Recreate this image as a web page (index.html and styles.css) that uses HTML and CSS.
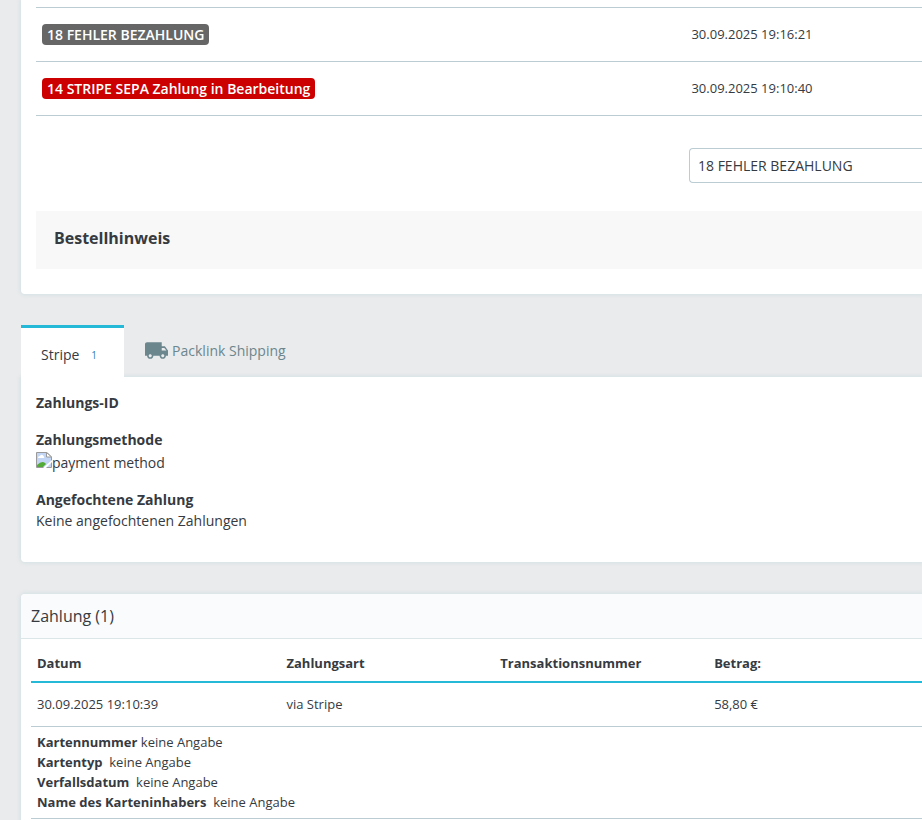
FILE: index.html
```
<!DOCTYPE html>
<html lang="de">
<head>
    <meta charset="UTF-8">
    <meta name="viewport" content="width=device-width, initial-scale=1.0">
    <title>Bestellung</title>
    <link rel="stylesheet" href="styles.css">
</head>
<body>
    <main class="content">
        <!-- Status -->
        <section class="card card-status">
            <table class="status-table">
                <tbody>
                    <tr>
                        <td class="col-status"><span class="badge badge-grey">18 FEHLER BEZAHLUNG</span></td>
                        <td>30.09.2025 19:16:21</td>
                    </tr>
                    <tr>
                        <td class="col-status"><span class="badge badge-red">14 STRIPE SEPA Zahlung in Bearbeitung</span></td>
                        <td>30.09.2025 19:10:40</td>
                    </tr>
                </tbody>
            </table>
            <form class="status-form">
                <select class="status-select" aria-label="Status">
                    <option>18 FEHLER BEZAHLUNG</option>
                    <option>14 STRIPE SEPA Zahlung in Bearbeitung</option>
                </select>
            </form>
            <div class="note">
                <h3 class="note-title">Bestellhinweis</h3>
            </div>
        </section>

        <!-- Module -->
        <nav class="tabs">
            <a class="tab tab-active" href="#stripe">Stripe <span class="tab-count">1</span></a>
            <a class="tab" href="#packlink">
                <!-- Material "local_shipping" -->
                <svg class="truck" viewBox="1 4 22 16" aria-hidden="true">
                    <path fill="currentColor" d="M20 8h-3V4H3c-1.100 0-2 .9-2 2v11h2c0 1.660 1.340 3 3 3s3-1.340 3-3h6c0 1.660 1.340 3 3 3s3-1.340 3-3h2v-5l-3-4zM6 18.500c-.83 0-1.500-.67-1.500-1.500s.67-1.500 1.500-1.500 1.500.67 1.500 1.500-.67 1.500-1.500 1.500zm13.500-9l1.960 2.500H17V9.500h2.500zm-1.500 9c-.83 0-1.500-.67-1.500-1.500s.67-1.500 1.500-1.500 1.500.67 1.500 1.500-.67 1.500-1.500 1.500z"/>
                </svg>
                Packlink Shipping
            </a>
        </nav>
        <section class="card card-stripe" id="stripe">
            <dl class="details">
                <dt>Zahlungs-ID</dt>
                <dt>Zahlungsmethode</dt>
                <dd class="method">
                    <svg class="broken" viewBox="0 0 16 16" aria-hidden="true">
                        <path fill="#c3d5f5" d="M.5.500h10.500l4.500 4.500v10.500H.5z"/>
                        <path fill="#fff" d="M2 6q0-2 2-2 1-2 2.500-1T8 5q1 1-.5 1z"/>
                        <path fill="#55ab38" d="M1 15v-2q5-5 8-2l1 1-3 3z"/>
                        <path fill="none" stroke="#9a9a9a" d="M.5 15.500V.500h10.500l4.500 4.500v10.500H.5"/>
                        <path fill="#fff" stroke="#9a9a9a" d="M10.500.500V5h5z"/>
                        <path fill="#fff" d="M16 8v2l-6 6H7z"/>
                    </svg>
                    <span>payment method</span>
                </dd>
                <dt>Angefochtene Zahlung</dt>
                <dd>Keine angefochtenen Zahlungen</dd>
            </dl>
        </section>

        <!-- Zahlung -->
        <section class="card card-payment">
            <h2 class="card-header">Zahlung (1)</h2>
            <div class="card-body">
                <table class="payment-table">
                    <thead>
                        <tr>
                            <th class="col-date">Datum</th>
                            <th class="col-mid">Zahlungsart</th>
                            <th class="col-mid">Transaktionsnummer</th>
                            <th>Betrag:</th>
                        </tr>
                    </thead>
                    <tbody>
                        <tr>
                            <td>30.09.2025 19:10:39</td>
                            <td>via Stripe</td>
                            <td></td>
                            <td>58,80 €</td>
                        </tr>
                        <tr>
                            <td class="payment-info" colspan="4">
                                <p><strong>Kartennummer</strong> keine Angabe</p>
                                <p><strong>Kartentyp</strong>&nbsp; keine Angabe</p>
                                <p><strong>Verfallsdatum</strong>&nbsp; keine Angabe</p>
                                <p><strong>Name des Karteninhabers</strong>&nbsp; keine Angabe</p>
                            </td>
                        </tr>
                    </tbody>
                </table>
            </div>
        </section>
    </main>
</body>
</html>
```

FILE: styles.css
```
* {
    box-sizing: border-box;
}
body {
    margin: 0;
    background-color: #eaebec;
    color: #363a41;
    font-family: "Open Sans", "Noto Sans", sans-serif;
    font-size: 14px;
    line-height: 21px;
    overflow-x: hidden;
}
.content {
    padding-left: 21px;
}
.card {
    background-color: #fff;
    border-radius: 4px 0 0 4px;
    box-shadow: 0 0 4px 1px #d3e0e4;
}
table {
    width: 100%;
    border-collapse: collapse;
    table-layout: fixed;
    font-size: 13px;
}
th,
td {
    padding: 0 6px;
    text-align: left;
}

/* Status */
.card-status {
    padding: 7px 0 25px 15px;
    border-top-left-radius: 0;
}
.status-table td {
    height: 54px;
    border-top: 1px solid #bbcdd2;
    border-bottom: 1px solid #bbcdd2;
}
.col-status {
    width: 73.3%;
}
.badge {
    display: inline-block;
    padding: 0 5px;
    border-radius: 4px;
    color: #fff;
    font-size: 14px;
    font-weight: 600;
}
.badge-grey {
    background-color: #666;
}
.badge-red {
    background-color: #c00;
}
.status-form {
    display: flex;
    justify-content: flex-end;
    padding: 32px 0 28px;
}
.status-select {
    width: 26.3%;
    height: 35px;
    padding: 0 8px;
    appearance: none;
    background-color: #fff;
    border: 1px solid #bbcdd2;
    border-right: none;
    border-radius: 4px 0 0 4px;
    color: #363a41;
    font-family: inherit;
    font-size: 14px;
}
.note {
    padding: 16px 18px 20px;
    background-color: #f8f8f8;
}
.note-title {
    margin: 0;
    font-size: 16px;
    font-weight: 700;
    line-height: 22px;
}

/* Module */
.tabs {
    display: flex;
    margin-top: 31px;
}
.tab {
    display: flex;
    align-items: center;
    height: 52px;
    padding: 0 21px 2px;
    color: #6c868e;
    text-decoration: none;
}
.tab-active {
    position: relative;
    padding: 3px 20px 0;
    background-color: #fff;
    border-top: 3px solid #25b9d7;
    color: #363a41;
}
.tab-count {
    margin: 3px 7px 0 12px;
    color: #2e7fb5;
    font-size: 10px;
}
.truck {
    width: 23px;
    height: 17px;
    margin-right: 4px;
}
.card-stripe {
    padding: 15px 15px 31px;
    border-top-left-radius: 0;
}
.details {
    margin: 0;
}
.details dt {
    font-weight: 700;
}
.details dt:not(:first-child) {
    margin-top: 16px;
}
.details dd {
    margin: 0;
}
.method {
    display: flex;
    padding-top: 2px;
}
.broken {
    width: 16px;
    height: 16px;
}

/* Zahlung */
.card-payment {
    margin-top: 32px;
}
.card-header {
    margin: 0;
    padding: 11px 10px;
    background-color: #fafbfc;
    border-bottom: 1px solid #dbe6e9;
    border-radius: 4px 0 0;
    font-size: 16px;
    font-weight: 500;
    line-height: 22px;
}
.card-body {
    padding: 7px 0 10px 10px;
}
.payment-table th {
    height: 36px;
    border-bottom: 2px solid #25b9d7;
    font-weight: 700;
}
.payment-table td {
    height: 44px;
    border-bottom: 1px solid #bbcdd2;
}
.payment-table .payment-info {
    padding: 5px 6px 6px;
    line-height: 20px;
}
.payment-info p {
    margin: 0;
}
.col-date {
    width: 28%;
}
.col-mid {
    width: 24%;
}
```
